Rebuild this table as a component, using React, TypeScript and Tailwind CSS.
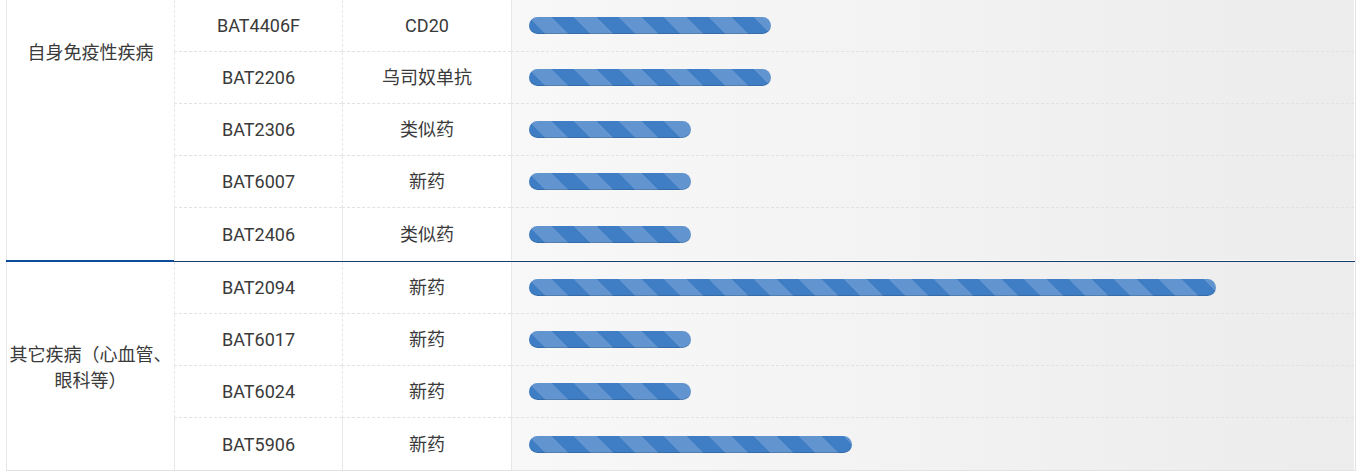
import React from "react";

type Row = { code: string; type: string; pct: number };

const group1: Row[] = [
  { code: "BAT4406F", type: "CD20", pct: 30 },
  { code: "BAT2206", type: "乌司奴单抗", pct: 30 },
  { code: "BAT2306", type: "类似药", pct: 20 },
  { code: "BAT6007", type: "新药", pct: 20 },
  { code: "BAT2406", type: "类似药", pct: 20 },
];

const group2: Row[] = [
  { code: "BAT2094", type: "新药", pct: 85 },
  { code: "BAT6017", type: "新药", pct: 20 },
  { code: "BAT6024", type: "新药", pct: 20 },
  { code: "BAT5906", type: "新药", pct: 40 },
];

const stripe: React.CSSProperties = {
  backgroundColor: "#3f7ec4",
  backgroundImage:
    "linear-gradient(45deg, rgba(255,255,255,0.18) 25%, transparent 25%, transparent 50%, rgba(255,255,255,0.18) 50%, rgba(255,255,255,0.18) 75%, transparent 75%, transparent)",
  backgroundSize: "45px 45px",
};

const latin = { fontFamily: "Roboto, 'Noto Sans CJK SC', sans-serif" };

function DataRow({ row, last }: { row: Row; last: boolean }) {
  const bb = last ? "" : "border-b border-dashed border-b-[#e2e2e2]";
  return (
    <div className="flex h-[52px]">
      <div
        className={`w-[168px] flex items-center justify-center border-l border-l-[#e6e6e6] text-[18px] font-normal text-[#3a3a3a] ${bb}`}
        style={latin}
      >
        {row.code}
      </div>
      <div
        className={`w-[169px] flex items-center justify-center border-l border-l-[#e6e6e6] text-[18px] font-normal text-[#3a3a3a] ${bb}`}
        style={latin}
      >
        {row.type}
      </div>
      <div
        className={`flex-1 mr-[1px] flex items-center px-[17px] border-l border-l-[#e6e6e6] bg-[linear-gradient(to_right,#f8f8f8,#ececec)] ${bb}`}
      >
        <div className="w-full h-[17px]">
          <div
            className="h-full rounded-full shadow-[inset_0_-1px_0_rgba(0,0,0,0.15)]"
            style={{ ...stripe, width: `${row.pct}%` }}
          />
        </div>
      </div>
    </div>
  );
}

export default function App() {
  return (
    <div
      className="w-[1359px] h-[476px] bg-white overflow-hidden"
      style={{ fontFamily: "'Noto Sans CJK SC', sans-serif" }}
    >
      <div className="ml-[6px] w-[1350px] border-r border-r-[#e2e2e2] border-b border-b-[#e2e2e2] flex flex-col">
        {/* Group 1 */}
        <div className="flex">
          <div className="w-[168px] border-l border-l-[#e6e6e6] flex justify-center pt-[38px] text-[18px] text-[#3a3a3a] leading-[26px]">
            自身免疫性疾病
          </div>
          <div className="flex-1 flex flex-col">
            {group1.map((r, i) => (
              <DataRow key={r.code} row={r} last={i === group1.length - 1} />
            ))}
          </div>
        </div>
        {/* Divider */}
        <div className="flex h-[2px]">
          <div className="w-[168px] h-[2px] bg-[#0b4d98]" />
          <div className="flex-1 h-[2px] border-b border-b-[#163c6c]" />
        </div>
        {/* Group 2 */}
        <div className="flex">
          <div className="w-[168px] border-l border-l-[#e6e6e6] flex items-center justify-center text-center text-[18px] text-[#3a3a3a] leading-[26px] whitespace-nowrap">
            <span>
              其它疾病（心血管、
              <br />
              眼科等）
            </span>
          </div>
          <div className="flex-1 flex flex-col">
            {group2.map((r, i) => (
              <DataRow key={r.code} row={r} last={i === group2.length - 1} />
            ))}
          </div>
        </div>
      </div>
    </div>
  );
}
